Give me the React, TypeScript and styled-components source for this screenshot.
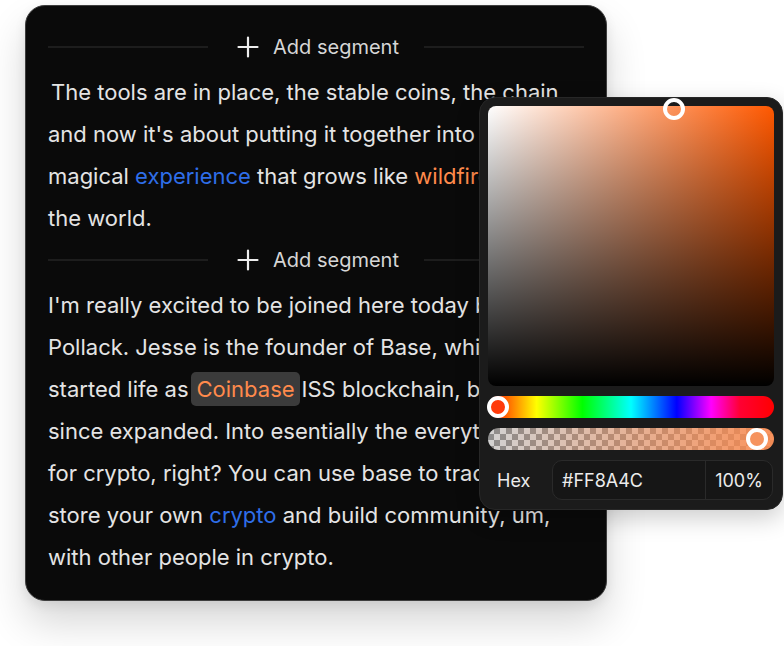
import React from 'react';
import styled, { createGlobalStyle } from 'styled-components';

const GlobalStyle = createGlobalStyle`
	html, body {
		margin: 0;
		padding: 0;
		background: #ffffff;
	}
	body {
		font-family: Inter, 'Noto Sans', sans-serif;
		-webkit-font-smoothing: antialiased;
	}
`;

// current colour in the picker
const picked = {
	hex: '#FF8A4C',
	hue: '#FF5800',
	saturation: 0.65,
	value: 0.99,
	huePos: 10,
	alphaPos: 269,
	alpha: 100,
};

const PlusIcon = () => (
	<svg width='24' height='24' viewBox='0 0 24 24' fill='none'>
		<path d='M12 2.5v19M2.5 12h19' stroke='#ededed' strokeWidth='2.2' strokeLinecap='round' />
	</svg>
);

const AddSegment = () => (
	<SegmentDivider>
		<DividerLine />
		<AddButton type='button'>
			<PlusIcon />
			<span>Add segment</span>
		</AddButton>
		<DividerLine />
	</SegmentDivider>
);

const ColorPicker = () => (
	<PickerPanel>
		<SatValArea $hue={picked.hue}>
			<Knob
				$inner='transparent'
				style={{
					left: `calc(${picked.saturation * 100}% - 11px)`,
					top: `calc(${(1 - picked.value) * 100}% - 11px)`,
				}}
			/>
		</SatValArea>
		<HueTrack>
			<Knob $inner='#ff3a0a' style={{ left: picked.huePos - 11, top: 0 }} />
		</HueTrack>
		<AlphaTrack>
			<Knob $inner='#f6935e' style={{ left: picked.alphaPos - 11, top: 0 }} />
		</AlphaTrack>
		<HexRow>
			<HexLabel>Hex</HexLabel>
			<HexInput>
				<HexValue>{picked.hex}</HexValue>
				<AlphaValue>{picked.alpha}%</AlphaValue>
			</HexInput>
		</HexRow>
	</PickerPanel>
);

const App = () => {
	return (
		<>
			<GlobalStyle />
			<Stage>
				<TranscriptCard>
					<AddSegment />
					<Segment $indent={3}>
						The tools are in place, the stable coins, the chain
						<br />
						and now it's about putting it together into a
						<br />
						magical <Blue>experience</Blue> that grows like <Orange>wildfire</Orange> around
						<br />
						the world.
					</Segment>
					<AddSegment />
					<Segment>
						I'm really excited to be joined here today by Jesse
						<br />
						Pollack. Jesse is the founder of Base, which
						<br />
						started life as<Highlight>Coinbase</Highlight>ISS blockchain, but has
						<br />
						since expanded. Into esentially the everything app
						<br />
						for crypto, right? You can use base to trade,
						<br />
						store your own <Blue>crypto</Blue> and build community, um,
						<br />
						with other people in crypto.
					</Segment>
				</TranscriptCard>
				<ColorPicker />
			</Stage>
		</>
	);
};

export default App;

const Stage = styled.div`
	position: relative;
	width: 784px;
	height: 646px;
	padding: 5px 0 0 25px;
	box-sizing: border-box;
`;

const TranscriptCard = styled.div`
	width: 582px;
	height: 596px;
	box-sizing: border-box;
	padding: 20px 22px 0 22px;
	background: #0a0a0a;
	border: 1.5px solid #3e3e3e;
	border-radius: 20px;
	box-shadow: 0 22px 40px rgba(0, 0, 0, 0.16), 0 4px 12px rgba(0, 0, 0, 0.08);
`;

const SegmentDivider = styled.div`
	display: flex;
	align-items: center;
	height: 42px;
	margin-bottom: 3px;
`;

const DividerLine = styled.div`
	flex: 1;
	height: 2px;
	background: #1d1d1d;
`;

const AddButton = styled.button`
	display: flex;
	align-items: center;
	gap: 13px;
	padding: 0 25px 0 28px;
	background: none;
	border: none;
	font-family: Inter, 'Noto Sans', sans-serif;
	font-size: 20px;
	color: #d6d6d6;
	cursor: pointer;
`;

const Segment = styled.p<{ $indent?: number }>`
	margin: 0;
	font-size: 22px;
	line-height: 42px;
	color: #e4e4e4;
	white-space: nowrap;
	text-indent: ${(p) => p.$indent ?? 0}px;
`;

const Blue = styled.span`
	color: #2f6ee8;
`;

const Orange = styled.span`
	color: #ff8a4c;
`;

const Highlight = styled.span`
	display: inline-block;
	margin: 0 2px;
	padding: 0 5px 0 6px;
	line-height: 34px;
	text-indent: 0;
	border-radius: 5px;
	background: #3b3b3b;
	color: #ff8a4c;
`;

const PickerPanel = styled.div`
	position: absolute;
	left: 479px;
	top: 97px;
	width: 304px;
	box-sizing: border-box;
	padding: 8px 8px 9px;
	display: flex;
	flex-direction: column;
	gap: 10px;
	background: #1b1b1b;
	border: 1px solid #272727;
	border-radius: 16px;
	box-shadow: 0 8px 24px rgba(0, 0, 0, 0.2);
`;

const SatValArea = styled.div<{ $hue: string }>`
	position: relative;
	height: 280px;
	border-radius: 8px;
	background: linear-gradient(to top, #000000, rgba(0, 0, 0, 0)),
		linear-gradient(to right, #ffffff, ${(p) => p.$hue});
`;

const Knob = styled.div<{ $inner: string }>`
	position: absolute;
	width: 22px;
	height: 22px;
	box-sizing: border-box;
	border-radius: 50%;
	border: 4px solid #ffffff;
	background: ${(p) => p.$inner};
`;

const HueTrack = styled.div`
	position: relative;
	height: 22px;
	border-radius: 11px;
	background: linear-gradient(
		to right,
		#ff0000 0%,
		#ffff00 17%,
		#00ff00 33%,
		#00ffff 50%,
		#0000ff 66%,
		#ff00ff 78%,
		#ff0033 88%,
		#ff0000 100%
	);
`;

const AlphaTrack = styled.div`
	position: relative;
	height: 22px;
	border-radius: 11px;
	background: linear-gradient(to right, rgba(255, 138, 76, 0), rgba(255, 138, 76, 0.88)),
		repeating-conic-gradient(#8d8d8d 0% 25%, #d2d2d2 0% 50%) 0 0 / 12px 12px;
`;

const HexRow = styled.div`
	display: flex;
	align-items: center;
	height: 40px;
	font-size: 18px;
	color: #ececec;
`;

const HexLabel = styled.span`
	flex: 0 0 64px;
	padding-left: 9px;
	box-sizing: border-box;
`;

const HexInput = styled.div`
	flex: 1;
	display: flex;
	height: 40px;
	margin-right: 1px;
	box-sizing: border-box;
	border: 1px solid #2a2a2a;
	border-radius: 10px;
	background: #161616;
`;

const HexValue = styled.div`
	flex: 1;
	display: flex;
	align-items: center;
	padding-left: 9px;
	border-right: 1px solid #2a2a2a;
`;

const AlphaValue = styled.div`
	width: 66px;
	display: flex;
	align-items: center;
	justify-content: center;
`;
